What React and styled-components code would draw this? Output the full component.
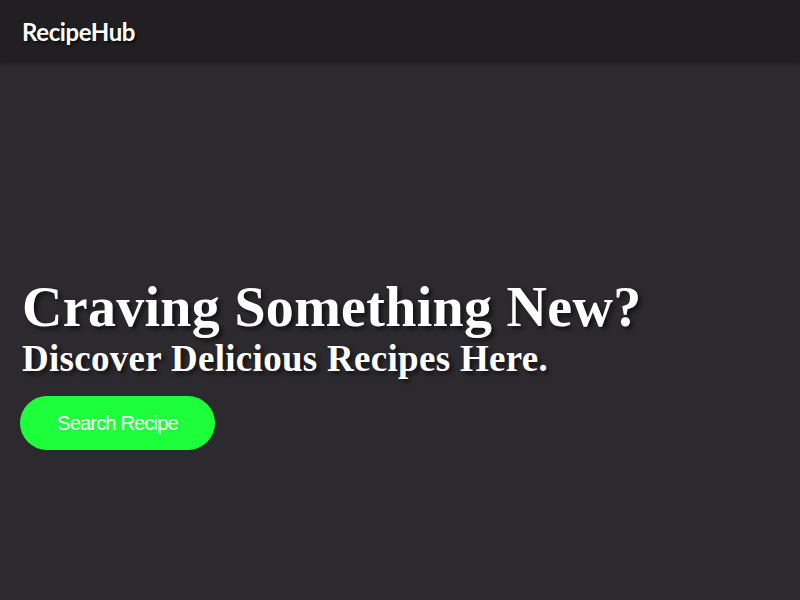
import React from 'react';
import styled, { createGlobalStyle } from 'styled-components';

const Global = createGlobalStyle`
  html, body {
    margin: 0;
    padding: 0;
    background: #2c2a2e;
  }
`;

const Page = styled.div`
  min-height: 600px;
  display: flex;
  flex-direction: column;
  background: #2c2a2e;
`;

const NavBar = styled.header`
  height: 62px;
  background: #211f22;
  display: flex;
  align-items: center;
  padding: 0 22px;
  box-shadow: 0 2px 4px rgba(0, 0, 0, 0.25);
`;

const Logo = styled.div`
  font-family: Lato, "Open Sans", sans-serif;
  font-weight: bold;
  font-size: 24px;
  color: #fff;
  text-shadow: 2px 2px 3px rgba(0, 0, 0, 0.6);
  letter-spacing: -0.4px;
`;

const Hero = styled.section`
  padding: 214px 20px 0;
  display: flex;
  flex-direction: column;
  align-items: flex-start;
`;

const Title = styled.h1`
  margin: 0;
  font-family: "Liberation Serif", serif;
  font-weight: bold;
  font-size: ${p => p.size}px;
  line-height: ${p => p.lh}px;
  letter-spacing: 0.3px;
  color: #fff;
  padding-left: 2px;
  text-shadow: 3px 3px 4px rgba(0, 0, 0, 0.6);
`;

const Button = styled.button`
  margin-top: 16px;
  width: 195px;
  height: 54px;
  border: none;
  border-radius: 27px;
  background: #1dff3b;
  color: #fff;
  font-family: "Liberation Sans", Arial, sans-serif;
  font-size: 20px;
  letter-spacing: -0.8px;
  cursor: pointer;
`;

export default function App() {
  return (
    <Page>
      <Global />
      <NavBar>
        <Logo>RecipeHub</Logo>
      </NavBar>
      <Hero>
        <Title size={56} lh={62}>Craving Something New?</Title>
        <Title size={37} lh={42}>Discover Delicious Recipes Here.</Title>
        <Button>Search Recipe</Button>
      </Hero>
    </Page>
  );
}
